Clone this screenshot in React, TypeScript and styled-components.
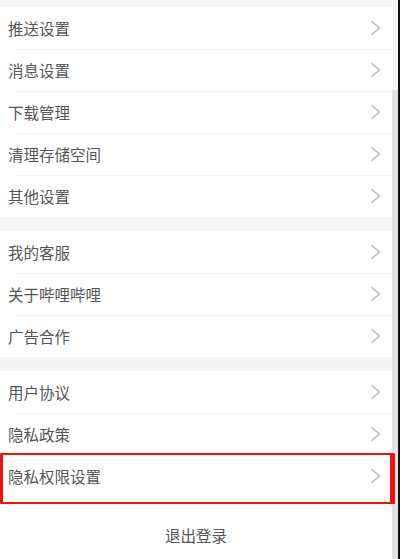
import React from 'react'
import styled, { createGlobalStyle, css } from 'styled-components'

const GlobalStyle = createGlobalStyle`
  body {
    margin: 0;
    font-family: "Noto Sans CJK SC", "Noto Sans", sans-serif;
  }
`

const Frame = styled.div`
  display: flex;
  width: 400px;
  height: 559px;
  overflow: hidden;
  background: #fff;
`

const Content = styled.div`
  flex: 1;
  display: flex;
  flex-direction: column;
  background: #f4f4f4;
  padding-top: 7px;
`

const Group = styled.div`
  background: #fff;
  margin-bottom: 14px;
`

const Row = styled.div<{ $highlight?: boolean }>`
  position: relative;
  height: 42px;
  display: flex;
  align-items: center;
  justify-content: space-between;
  padding: 0 11px 0 8px;

  & + &::before {
    content: '';
    position: absolute;
    top: 0;
    left: 15px;
    right: 0;
    height: 1px;
    background: #f3f3f3;
  }

  ${(p) =>
    p.$highlight &&
    css`
      &::after {
        content: '';
        position: absolute;
        z-index: 2;
        top: -2px;
        bottom: -7px;
        left: 0;
        right: -3px;
        border: 2px solid #f01010;
        border-left-width: 3px;
        border-right-width: 5px;
        border-radius: 1px;
      }
    `}
`

const Label = styled.span`
  font-size: 15.5px;
  color: #555;
`

const Logout = styled.div`
  flex: 1;
  background: #fff;
  margin-top: -14px;
  padding-top: 27px;
  text-align: center;
  font-size: 15.5px;
  color: #555;
`

const Scrollbar = styled.div`
  width: 6px;
  display: flex;
  flex-direction: column;
  background: #f6f6f6;
`

const Thumb = styled.div`
  margin-top: 90px;
  flex: 1;
  background: #e2e2e2;
`

const Edge = styled.div`
  width: 2px;
  background: #111;
`

const Chevron = () => (
  <svg width="11" height="16" viewBox="0 0 11 16">
    <polyline
      points="1.5,1.2 9.5,8 1.5,14.8"
      fill="none"
      stroke="#b3b3b3"
      strokeWidth="1.4"
      strokeLinejoin="miter"
    />
  </svg>
)

const groups: string[][] = [
  ['推送设置', '消息设置', '下载管理', '清理存储空间', '其他设置'],
  ['我的客服', '关于哔哩哔哩', '广告合作'],
  ['用户协议', '隐私政策', '隐私权限设置'],
]

export default function App() {
  return (
    <>
      <GlobalStyle />
      <Frame>
        <Content>
          {groups.map((items, gi) => (
            <Group key={gi}>
              {items.map((name) => (
                <Row key={name} $highlight={name === '隐私权限设置'}>
                  <Label>{name}</Label>
                  <Chevron />
                </Row>
              ))}
            </Group>
          ))}
          <Logout>退出登录</Logout>
        </Content>
        <Scrollbar>
          <Thumb />
        </Scrollbar>
        <Edge />
      </Frame>
    </>
  )
}
